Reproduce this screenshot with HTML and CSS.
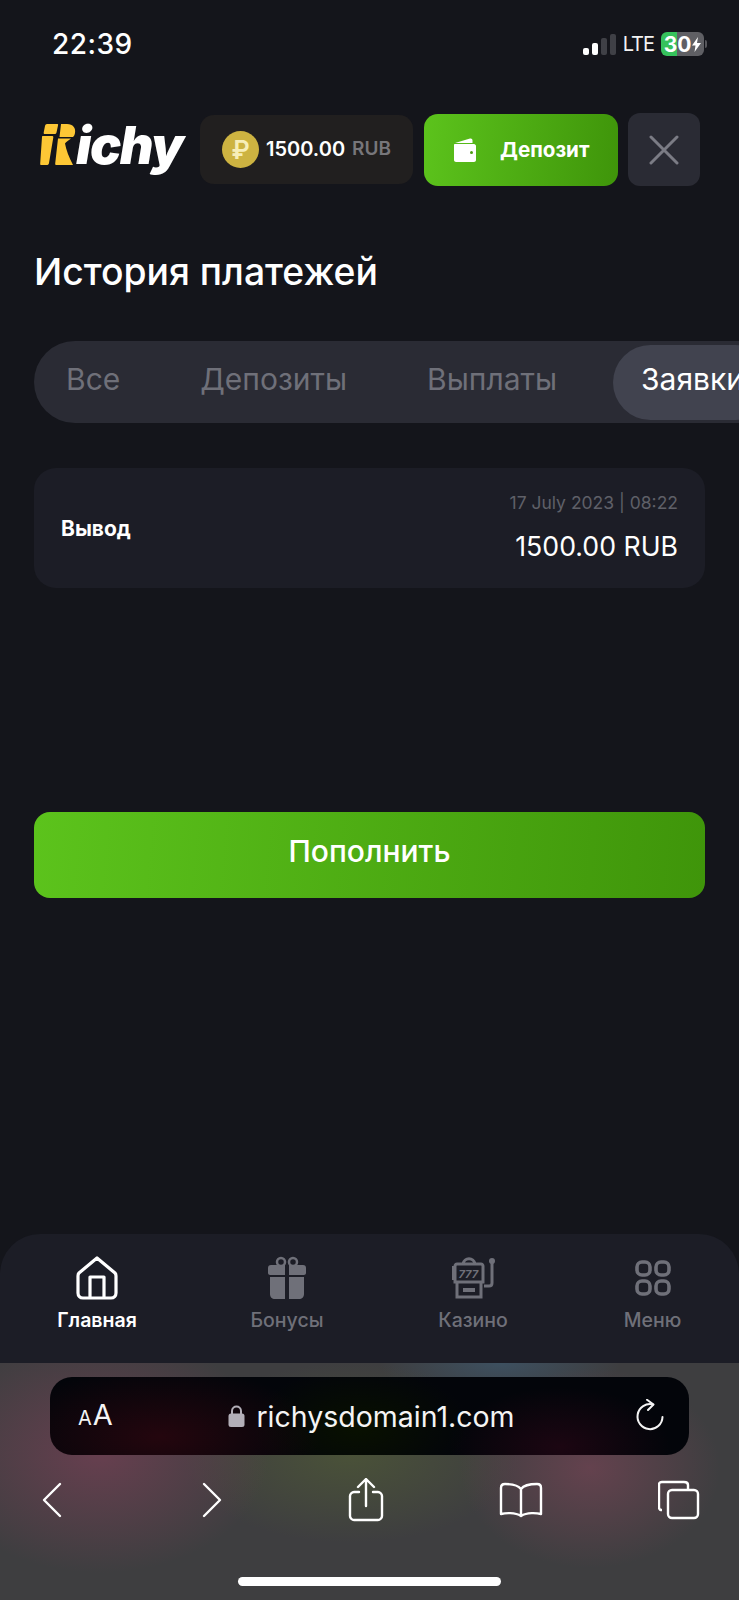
FILE: index.html

```html
<!DOCTYPE html>
<html lang="ru">
<head>
    <meta charset="UTF-8">
    <meta name="viewport" content="width=device-width, initial-scale=1.0">
    <title>История платежей</title>
    <link rel="stylesheet" href="styles.css">
</head>
<body>
    <div class="status-bar">
        <span class="time">22:39</span>
        <div class="status-right">
            <div class="signal"><i class="on s1"></i><i class="on s2"></i><i class="s3"></i><i class="s4"></i></div>
            <span class="lte">LTE</span>
            <div class="battery"><span>30</span><svg width="9" height="15" viewBox="0 0 9 15"><path d="M6 0 0 8.5h3.5L2.5 15 9 6H5z" fill="#fff"/></svg></div>
            <i class="battery-tip"></i>
        </div>
    </div>

    <header class="top">
        <div class="logo">
            <svg class="logo-mark" width="36" height="42" viewBox="0 0 36 42">
                <!-- yellow blocks of the R -->
                <path d="M7 0h10c1 0 1.500.5 1 1.500l-1.500 7c-.3 1-1 1.500-2 1.500H5c-1 0-1.500-.5-1.300-1.500L5 2c.3-1.200 1-2 2-2z" fill="#fdc735"/>
                <path d="M3 12h9c1 0 1.500.5 1.300 1.500L9 39c-.2 1.500-1 2-2.500 2h-5c-1 0-1.500-.5-1.300-1.500L2 13c0-.7.3-1 1-1z" fill="#fdc735"/>
                <path d="M21 0h6c6 0 9 4 8 9-.3 2-1 3-2 4H19.500z" fill="#fdc735"/>
                <path d="M18 14.500h13c-2 2-5 3-6 5 1 6 4 14 8 21.500H17c-1.500 0-2-.5-1.800-1.500z" fill="#fdc735"/>
            </svg>
            <span class="logo-text">ichy</span>
        </div>
        <div class="balance">
            <span class="coin">₽</span>
            <span class="amount">1500.00</span>
            <span class="currency">RUB</span>
        </div>
        <button class="deposit">
            <svg width="26" height="26" viewBox="0 0 26 26"><path d="M3 6 18 1.500c1.500-.4 2.500.5 2.500 2V6zM3 7h19c1 0 2 1 2 2v14c0 1-1 2-2 2H4c-1 0-2-1-2-2V8c0-.6.4-1 1-1z" fill="#fff"/><circle cx="19.500" cy="15.500" r="1.500" fill="#4d9e14"/></svg>
            <span>Депозит</span>
        </button>
        <button class="close">
            <svg width="30" height="30" viewBox="0 0 30 30"><path d="M2 2 28 28M28 2 2 28" stroke="#7b7c85" stroke-width="3" stroke-linecap="round" fill="none"/></svg>
        </button>
    </header>

    <main class="content">
        <h1>История платежей</h1>

        <div class="tabs">
            <span class="tab">Все</span>
            <span class="tab">Депозиты</span>
            <span class="tab">Выплаты</span>
            <span class="tab active">Заявки</span>
        </div>

        <div class="card">
            <span class="card-title">Вывод</span>
            <div class="card-right">
                <span class="card-date">17 July 2023 | 08:22</span>
                <span class="card-sum">1500.00 RUB</span>
            </div>
        </div>

        <button class="refill">Пополнить</button>
    </main>

    <nav class="bottom-nav">
        <div class="nav-item active">
            <svg width="42" height="44" viewBox="0 0 42 44"><path d="M21 2 39 17c1 1 1 2 1 3v17c0 3-2 5-5 5H7c-3 0-5-2-5-5V20c0-1 0-2 1-3zM14 41V21h14v20" fill="none" stroke="#fff" stroke-width="3.200" stroke-linejoin="round"/></svg>
            <span>Главная</span>
        </div>
        <div class="nav-item">
            <svg width="40" height="44" viewBox="0 0 40 44"><path d="M1 12c0-2 1-3 3-3h14v10H3c-1 0-2-1-2-2zM22 9h14c2 0 3 1 3 3v5c0 1-1 2-2 2H22zM3 21h15v22H8c-3 0-5-2-5-5zM22 21h15v17c0 3-2 5-5 5H22z" fill="#6f7079"/><circle cx="14" cy="6" r="4" fill="none" stroke="#6f7079" stroke-width="2.500"/><circle cx="26" cy="6" r="4" fill="none" stroke="#6f7079" stroke-width="2.500"/></svg>
            <span>Бонусы</span>
        </div>
        <div class="nav-item">
            <svg width="44" height="42" viewBox="0 0 44 42"><g fill="none" stroke="#6f7079" stroke-width="3"><path d="M4 9c0-1 1-2 2-2h24c1 0 2 1 2 2v16H4zM6 25h24v15H6zM12 7c1-7 11-7 12 0"/><path d="M33 29h5c2 0 3-1 3-3V6"/><path d="M12 33h12" stroke-width="4"/></g><circle cx="41" cy="4" r="3" fill="#6f7079"/><path d="M4 9H1v14h3z" fill="#6f7079"/><text x="7.500" y="21" class="reels">777</text></svg>
            <span>Казино</span>
        </div>
        <div class="nav-item">
            <svg width="36" height="36" viewBox="0 0 36 36"><g fill="none" stroke="#6f7079" stroke-width="3.600"><rect x="2" y="2" width="13" height="13" rx="5"/><rect x="21" y="2" width="13" height="13" rx="5"/><rect x="2" y="21" width="13" height="13" rx="5"/><rect x="21" y="21" width="13" height="13" rx="5"/></g></svg>
            <span>Меню</span>
        </div>
    </nav>

    <section class="browser">
        <div class="url-bar">
            <span class="aa"><small>A</small>A</span>
            <div class="url">
                <svg width="17" height="24" viewBox="0 0 17 24"><path d="M4 10V7c0-6 9-6 9 0v3" fill="none" stroke="#b3afb8" stroke-width="2"/><rect x="0.500" y="9.500" width="16" height="13.500" rx="2.500" fill="#b3afb8"/></svg>
                <span>richysdomain1.com</span>
            </div>
            <svg width="30" height="34" viewBox="0 0 30 34"><path d="M18 5.500A12.500 12.500 0 1 0 27.500 18" fill="none" stroke="#f4f4f4" stroke-width="2" stroke-linecap="round"/><path d="M12 .8 18.500 5.500 13 11" fill="none" stroke="#f4f4f4" stroke-width="2" stroke-linecap="round" stroke-linejoin="round"/></svg>
        </div>
        <div class="toolbar">
            <svg width="22" height="36" viewBox="0 0 22 36"><path d="M19 2 3 18l16 16" fill="none" stroke="#fff" stroke-width="2.400" stroke-linecap="round" stroke-linejoin="round"/></svg>
            <svg width="22" height="36" viewBox="0 0 22 36"><path d="M3 2l16 16L3 34" fill="none" stroke="#fff" stroke-width="2.400" stroke-linecap="round" stroke-linejoin="round"/></svg>
            <svg width="36" height="44" viewBox="0 0 36 44"><path d="M11 14H6c-2 0-4 2-4 4v20c0 2 2 4 4 4h24c2 0 4-2 4-4V18c0-2-2-4-4-4h-5M18 28V2M10 9l8-8 8 8" fill="none" stroke="#fff" stroke-width="2.400" stroke-linecap="round" stroke-linejoin="round"/></svg>
            <svg width="44" height="36" viewBox="0 0 44 36"><path d="M22 7C19 3 14 2 6 2 3 2 2 3 2 6v26c4-1 14-2 20 2 6-4 16-3 20-2V6c0-3-1-4-4-4-8 0-13 1-16 5zM22 7v26" fill="none" stroke="#fff" stroke-width="2.400" stroke-linejoin="round"/></svg>
            <svg width="42" height="40" viewBox="0 0 42 40"><path d="M4 30c-2 0-3-1-3-3V5c0-2 1-3 3-3h22c2 0 4 1 4 3v4" fill="none" stroke="#fff" stroke-width="2.400"/><rect x="10" y="10" width="30" height="28" rx="4" fill="none" stroke="#fff" stroke-width="2.400"/></svg>
        </div>
        <div class="home-bar"></div>
    </section>
</body>
</html>
```

FILE: styles.css

```css
* { box-sizing: border-box; }
body {
    margin: 0;
    width: 739px;
    height: 1600px;
    overflow: hidden;
    display: flex;
    flex-direction: column;
    background: #14151b;
    color: #fff;
    font-family: Inter, "Noto Sans", sans-serif;
}
button { border: none; font-family: inherit; color: #fff; padding: 0; }

/* status bar */
.status-bar { height: 113px; padding: 29px 32px 0 52px; display: flex; justify-content: space-between; align-items: flex-start; }
.time { font-size: 28px; line-height: 30px; font-weight: 500; letter-spacing: 0.5px; }
.status-right { display: flex; align-items: center; gap: 7px; padding-top: 3px; }
.signal { display: flex; align-items: flex-end; gap: 3px; height: 21px; }
.signal i { width: 6px; background: #3f4046; border-radius: 2px; }
.signal .on { background: #fff; }
.s1 { height: 7px; }
.s2 { height: 12px; }
.s3 { height: 17px; }
.s4 { height: 21px; }
.lte { font-size: 20px; line-height: 24px; color: #f2f2f2; letter-spacing: -1px; }
.battery {
    width: 43px;
    height: 24px;
    border-radius: 6px;
    display: flex;
    align-items: center;
    justify-content: center;
    gap: 1px;
    font-size: 21px;
    font-weight: 700;
    background: linear-gradient(90deg, #36c25c 37%, #5f5f64 37%);
}
.battery-tip { width: 2px; height: 8px; background: #56565b; margin-left: -6px; border-radius: 0 2px 2px 0; }

/* header row */
.top { display: flex; align-items: center; height: 73px; padding: 0 39px 0 40px; }
.logo { width: 160px; display: flex; align-items: flex-start; height: 62px; padding-top: 5px; }
.logo-text { font-size: 52px; line-height: 44px; font-weight: 900; font-style: italic; letter-spacing: -1.5px; }
.balance {
    width: 213px;
    height: 69px;
    border-radius: 14px;
    background: #211f1f;
    display: flex;
    align-items: center;
    padding: 0 0 2px 22px;
    font-size: 20px;
    font-weight: 600;
}
.coin {
    width: 37px;
    height: 37px;
    border-radius: 50%;
    background: #cdb341;
    display: flex;
    align-items: center;
    justify-content: center;
    font-size: 25px;
    font-weight: 600;
    color: #f7eeb8;
    margin: 2px 7px 0 0;
}
.currency { color: #77767a; margin-left: 7px; font-size: 19px; }
.deposit {
    width: 194px;
    height: 72px;
    margin-left: 11px;
    align-self: flex-end;
    border-radius: 14px;
    background: linear-gradient(95deg, #5cc31c, #3f950a);
    display: flex;
    align-items: center;
    padding-left: 28px;
    gap: 22px;
    font-size: 20.6px;
    font-weight: 700;
}
.deposit span { padding-bottom: 2px; }
.close {
    width: 72px;
    height: 73px;
    margin-left: 10px;
    border-radius: 12px;
    background: #2a2b34;
    display: flex;
    align-items: center;
    justify-content: center;
}

/* payments */
.content { flex: 1; padding: 0 34px; min-height: 0; }
.content h1 { margin: 64px 0 0; font-size: 37.3px; line-height: 44px; font-weight: 500; }
.tabs {
    width: 760px;
    height: 82px;
    margin-top: 47px;
    border-radius: 41px;
    background: #2a2b34;
    display: flex;
    align-items: center;
    padding: 0 4px 0 32px;
    font-size: 30px;
    color: #6f7079;
}
.tab { margin-right: 80px; padding-bottom: 6px; }
.tab.active {
    margin: 0 0 0 -24px;
    height: 75px;
    width: 160px;
    padding: 0 0 0 28px;
    border-radius: 38px;
    background: #41434f;
    color: #fff;
    line-height: 69px;
}
.card {
    height: 120px;
    margin-top: 45px;
    border-radius: 22px;
    background: #1c1d26;
    display: flex;
    justify-content: space-between;
    align-items: center;
    padding: 0 27px;
}
.card-title { font-size: 21px; font-weight: 700; }
.card-right { display: flex; flex-direction: column; align-items: flex-end; gap: 16px; padding-bottom: 3px; }
.card-date { font-size: 17.5px; line-height: 22px; color: #5f6068; }
.card-sum { font-size: 26.7px; line-height: 32px; }
.refill {
    display: block;
    width: 100%;
    height: 86px;
    margin-top: 224px;
    padding-bottom: 8px;
    border-radius: 16px;
    background: linear-gradient(95deg, #5cc31c, #3f950a);
    font-size: 30px;
    font-weight: 500;
}

/* bottom tab bar */
.bottom-nav {
    height: 129px;
    border-radius: 40px 40px 0 0;
    background: #1c1d26;
    display: grid;
    grid-template-columns: 194px 186px 186px 173px;
    padding-top: 22px;
}
.nav-item { display: flex; flex-direction: column; align-items: center; font-size: 19.5px; font-weight: 500; color: #6f7079; }
.nav-item svg { height: 44px; }
.nav-item span { margin-top: 7px; line-height: 26px; }
.nav-item.active { color: #fff; font-weight: 600; }
.reels { font-size: 11px; font-weight: 700; font-style: italic; fill: #6f7079; stroke: none; }

/* safari chrome */
.browser {
    height: 237px;
    padding: 14px 50px 0;
    display: flex;
    flex-direction: column;
    background:
        radial-gradient(ellipse 170px 120px at 100px 90px, #673f4f 0%, transparent 100%),
        radial-gradient(ellipse 130px 100px at 590px 105px, #64424e 0%, transparent 100%),
        radial-gradient(ellipse 170px 90px at 350px 90px, #4a5238 0%, transparent 100%),
        radial-gradient(ellipse 120px 40px at 500px 0, #3d5060 0%, transparent 100%),
        #3e3e40;
}
.url-bar {
    height: 78px;
    flex: none;
    border-radius: 22px;
    display: flex;
    align-items: center;
    justify-content: space-between;
    padding: 0 24px 0 28px;
    color: #f4f4f4;
    background:
        radial-gradient(ellipse 160px 70px at 110px 60px, #24060e 0%, transparent 100%),
        radial-gradient(ellipse 110px 60px at 310px 50px, #081000 0%, transparent 100%),
        radial-gradient(ellipse 110px 60px at 510px 70px, #1c0612 0%, transparent 100%),
        #03050a;
}
.aa { font-size: 29px; line-height: 34px; width: 50px; }
.aa small { font-size: 20px; margin-right: 1px; }
.url { display: flex; align-items: center; gap: 11px; font-size: 28.5px; margin-left: -20px; }
.toolbar {
    display: grid;
    grid-template-columns: 104px 216px 92px 218px 98px;
    justify-items: center;
    align-items: center;
    height: 44px;
    margin: 23px 0 0 -50px;
}
.home-bar { width: 263px; height: 9px; border-radius: 5px; background: #fff; margin: 55px 0 0 188px; }
```
